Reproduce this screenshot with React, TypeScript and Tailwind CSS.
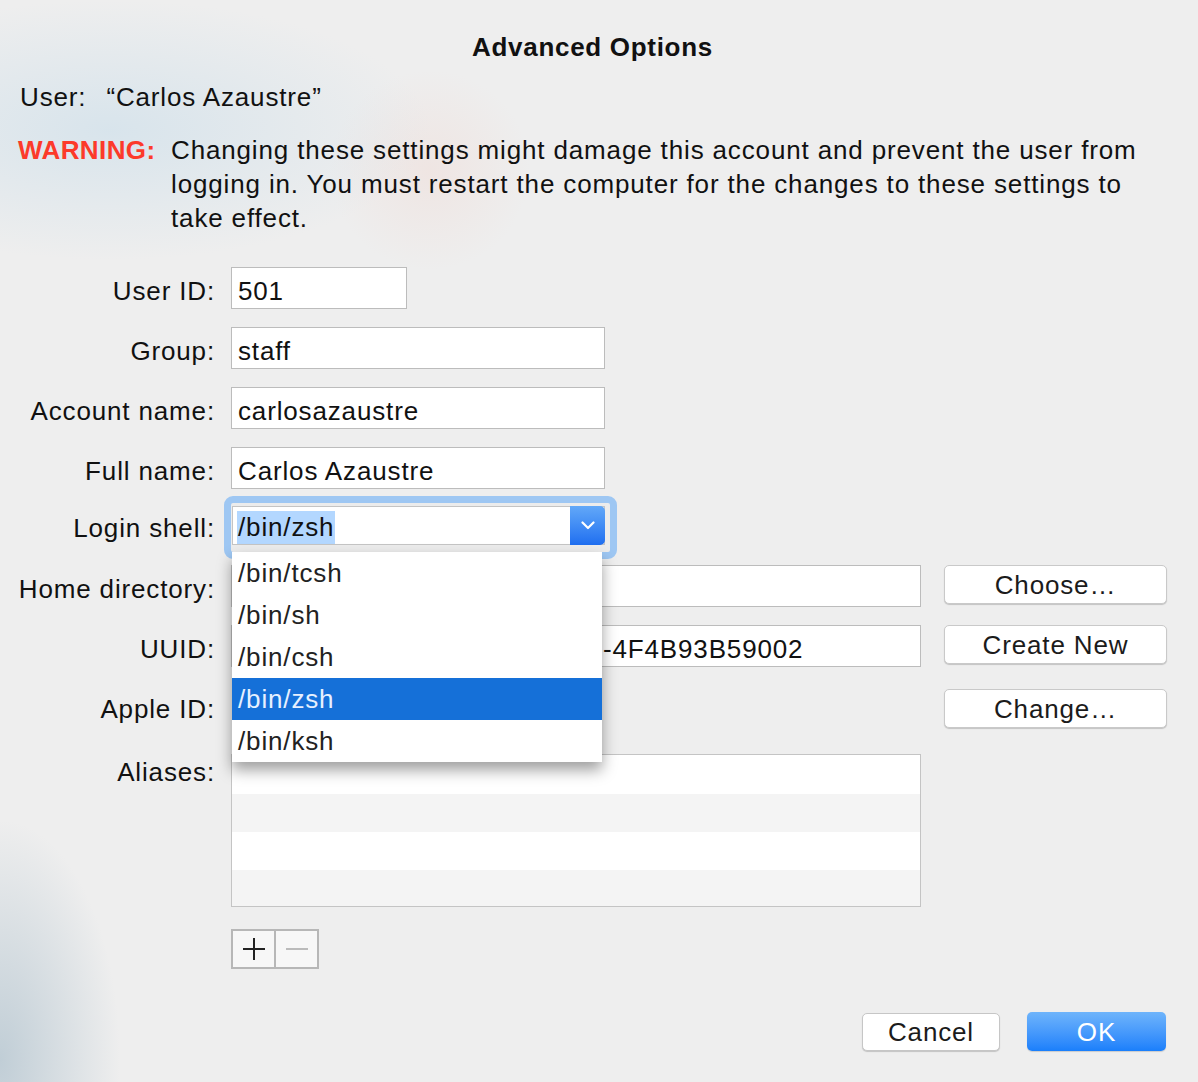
import type { ReactNode } from "react";

const shells = ["/bin/tcsh", "/bin/sh", "/bin/csh", "/bin/zsh", "/bin/ksh"];

function Row({
  label,
  className,
  labelClass,
  children,
}: {
  label: string;
  className?: string;
  labelClass?: string;
  children: ReactNode;
}) {
  return (
    <div className={`flex items-center ${className ?? ""}`}>
      <div className={`w-[215px] shrink-0 text-right ${labelClass ?? ""}`}>
        {label}
      </div>
      <div className="ml-4 flex items-start">{children}</div>
    </div>
  );
}

function TextField({
  value,
  width,
  indent,
}: {
  value: string;
  width: string;
  indent?: string;
}) {
  return (
    <div
      className={`${width} h-[42px] overflow-hidden whitespace-nowrap border border-[#bcbcbc] bg-white pt-[6px] leading-[34px] ${indent ?? "pl-[6px]"}`}
    >
      {value}
    </div>
  );
}

function SideButton({ children }: { children: ReactNode }) {
  return (
    <button className="ml-[23px] h-[39px] w-[223px] rounded-[5px] border border-[#c9c9c9] bg-white tracking-[0.85px] text-[#1b1b1b] shadow-[0_1px_1px_rgba(0,0,0,0.18)]">
      {children}
    </button>
  );
}

export default function App() {
  return (
    <div
      className="relative h-[1082px] w-[1198px] overflow-hidden bg-[#eeeeee] bg-[radial-gradient(ellipse_320px_130px_at_110px_130px,rgba(198,220,234,0.55),transparent),radial-gradient(circle_100px_at_430px_170px,rgba(240,218,212,0.45),transparent),radial-gradient(ellipse_120px_240px_at_0px_1060px,rgba(190,204,213,0.95),transparent)] text-[26px] leading-[34px] tracking-[0.85px] text-[#111]"
      style={{ fontFamily: '"Liberation Sans", Arial, sans-serif' }}
    >
      <div className="pt-[30px]">
        <h1 className="pr-[13px] text-center font-bold tracking-[0.7px]">
          Advanced Options
        </h1>

        <p className="mt-[16px] pl-[20px]">
          User:<span className="ml-[20px]">“Carlos Azaustre”</span>
        </p>

        <div className="mt-[19px] flex whitespace-nowrap">
          <span className="w-[171px] shrink-0 pl-[18px] font-bold tracking-[0.4px] text-[#fc3a2a]">
            WARNING:
          </span>
          <p>
            Changing these settings might damage this account and prevent the
            user from
            <br />
            logging in. You must restart the computer for the changes to these
            settings to
            <br />
            take effect.
          </p>
        </div>

        {/* Form */}
        <div className="mt-[32px]">
          <Row label="User ID:" labelClass="pt-[6px]">
            <TextField value="501" width="w-[176px]" />
          </Row>
          <Row label="Group:" className="mt-[18px]" labelClass="pt-[6px]">
            <TextField value="staff" width="w-[374px]" />
          </Row>
          <Row label="Account name:" className="mt-[18px]" labelClass="pt-[6px]">
            <TextField value="carlosazaustre" width="w-[374px]" />
          </Row>
          <Row label="Full name:" className="mt-[18px]" labelClass="pt-[6px]">
            <TextField value="Carlos Azaustre" width="w-[374px]" />
          </Row>

          <Row label="Login shell:" className="mt-[7px]">
            <div className="-ml-[7px] h-[63px] w-[393px] rounded-[9px] border-[7px] border-[#9ec7f3] bg-[#ececec] pb-[7px] pl-[1px] pr-[5px] pt-[3px]">
              <div className="flex h-[39px] border border-[#c4c4c4] bg-white">
                <div className="flex-1 pl-[4px] pt-[3px]">
                  <span className="inline-block h-[33px] bg-[#b3d7ff] px-[1px] leading-[33px]">
                    /bin/zsh
                  </span>
                </div>
                <div className="-my-px -mr-px flex w-[35px] items-center justify-center rounded-r-[5px] bg-gradient-to-b from-[#62a8f8] to-[#1f6ef0]">
                  <svg width="14" height="9" viewBox="0 0 14 9" fill="none">
                    <path
                      d="M1.5 1.5 7 7l5.5-5.5"
                      stroke="white"
                      strokeWidth="2.2"
                      strokeLinecap="round"
                      strokeLinejoin="round"
                    />
                  </svg>
                </div>
              </div>
            </div>
          </Row>

          <Row label="Home directory:" className="mt-[6px]" labelClass="pt-[6px]">
            <TextField value="" width="w-[690px]" />
            <SideButton>Choose…</SideButton>
          </Row>
          <Row label="UUID:" className="mt-[18px]" labelClass="pt-[6px]">
            {/* only the tail of the UUID shows past the open menu */}
            <TextField
              value="-4F4B93B59002"
              width="w-[690px]"
              indent="pl-[371px]"
            />
            <SideButton>Create New</SideButton>
          </Row>
          <Row label="Apple ID:" className="mt-[22px]">
            <div className="h-[39px] w-[690px]" />
            <SideButton>Change…</SideButton>
          </Row>

          <div className="mt-[26px] flex items-start">
            <div className="w-[215px] shrink-0 pt-px text-right">Aliases:</div>
            <div className="ml-4 h-[153px] w-[690px] border border-[#c4c4c4] bg-white pt-px">
              <div className="h-[38px] bg-white" />
              <div className="h-[38px] bg-[#f4f4f4]" />
              <div className="h-[38px] bg-white" />
              <div className="h-[36px] bg-[#f4f4f4]" />
            </div>
          </div>

          <div className="ml-[231px] mt-[22px] flex h-[40px] w-[88px] border-2 border-[#b7b7b7] bg-[#f7f7f7]">
            <div className="flex flex-1 items-center justify-center border-r-2 border-[#b7b7b7]">
              <svg width="22" height="22" viewBox="0 0 22 22">
                <path d="M11 0v22M0 11h22" stroke="#222" strokeWidth="2" />
              </svg>
            </div>
            <div className="flex flex-1 items-center justify-center">
              <svg width="22" height="4" viewBox="0 0 22 4">
                <path d="M0 2h22" stroke="#bbbbbb" strokeWidth="2" />
              </svg>
            </div>
          </div>

          <div className="mt-[43px] flex justify-end gap-[27px] pr-[32px]">
            <button className="mt-px h-[38px] w-[138px] rounded-[5px] border border-[#c6c6c6] bg-white tracking-[0.85px] text-[#1b1b1b] shadow-[0_1px_1px_rgba(0,0,0,0.18)]">
              Cancel
            </button>
            <button className="h-[39px] w-[139px] rounded-[5px] bg-gradient-to-b from-[#6eb4fb] to-[#197ffb] tracking-[0.85px] text-white shadow-[0_1px_1px_rgba(0,0,0,0.15)]">
              OK
            </button>
          </div>
        </div>
      </div>

      {/* Open shell menu */}
      <ul className="absolute left-[232px] top-[552px] z-10 w-[370px] bg-white text-[#222] shadow-[0_8px_14px_rgba(0,0,0,0.38)]">
        {shells.map((s) => (
          <li
            key={s}
            className={
              s === "/bin/zsh"
                ? "h-[42px] bg-[#1570d8] pl-[6px] leading-[42px] text-[#e6f0ff]"
                : "h-[42px] pl-[6px] leading-[42px]"
            }
          >
            {s}
          </li>
        ))}
      </ul>
    </div>
  );
}
